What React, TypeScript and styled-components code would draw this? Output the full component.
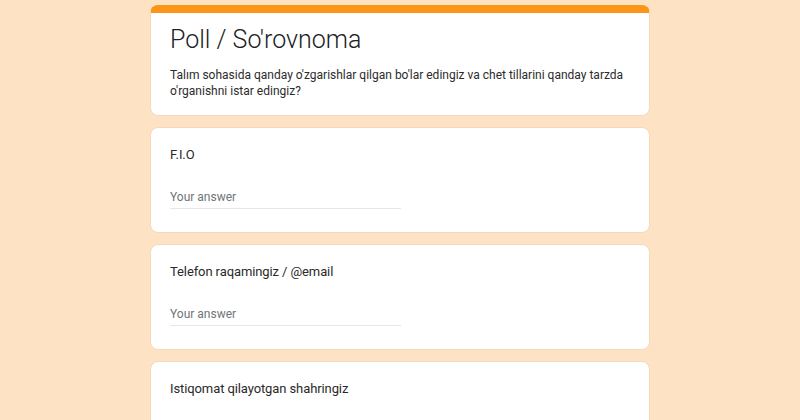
import React from 'react'
import styled, { createGlobalStyle } from 'styled-components'

const GlobalStyle = createGlobalStyle`
  html, body {
    margin: 0;
    padding: 0;
    background: #fde3c3;
    font-family: Roboto, "Noto Sans", Arial, sans-serif;
    color: #202124;
  }
`

const Page = styled.main`
  width: 500px;
  margin: 0 auto;
  padding-top: 5px;
  display: flex;
  flex-direction: column;
  gap: 11px;
`

const Card = styled.section`
  box-sizing: border-box;
  background: #fff;
  border: 1px solid #f2d9bb;
  border-radius: 8px;
  padding: 17px 19px 23px;
`

const HeaderCard = styled(Card)`
  border-top: 8px solid #fb9518;
  padding: 11px 19px 16px;
`

const Title = styled.h1`
  margin: 0;
  font-size: 25px;
  line-height: 32px;
  font-weight: 300;
  letter-spacing: 0;
  color: #202124;
`

const Description = styled.p`
  margin: 11px 0 0;
  font-size: 12px;
  line-height: 16px;
  color: #2b2b2b;
`

const Question = styled.div`
  font-size: 13px;
  line-height: 20px;
  letter-spacing: -0.1px;
  color: #2a2a2a;
`

const AnswerInput = styled.input`
  display: block;
  box-sizing: border-box;
  width: 231px;
  margin-top: 24px;
  padding: 0 0 3px;
  border: none;
  border-bottom: 1px solid #e6e6e6;
  outline: none;
  background: transparent;
  font-family: inherit;
  font-size: 12px;
  line-height: 16px;
  height: 20px;
  color: #202124;

  &::placeholder {
    color: #70757a;
  }
`

const questions = [
  { title: 'F.I.O', input: true },
  { title: 'Telefon raqamingiz / @email', input: true },
  { title: 'Istiqomat qilayotgan shahringiz', input: true },
]

export default function App() {
  return (
    <>
      <GlobalStyle />
      <Page>
        <HeaderCard>
          <Title>Poll / So'rovnoma</Title>
          <Description>
            Talım sohasida qanday o'zgarishlar qilgan bo'lar edingiz va chet tillarini qanday tarzda
            o'rganishni istar edingiz?
          </Description>
        </HeaderCard>
        {questions.map(q => (
          <Card key={q.title}>
            <Question>{q.title}</Question>
            {q.input && <AnswerInput placeholder="Your answer" />}
          </Card>
        ))}
      </Page>
    </>
  )
}
